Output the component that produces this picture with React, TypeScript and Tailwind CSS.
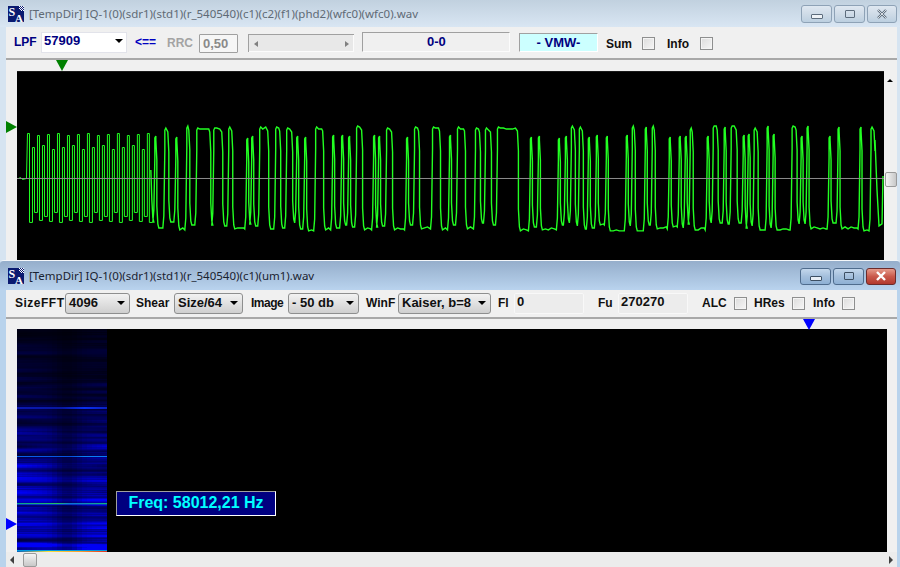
import type { ReactNode } from "react";

const ui = "font-['Liberation_Sans',Arial,sans-serif]";

// [start, end, level] of each high part of the trace, 0 = tall, 1 = short
const pulses: [number, number, number][] = [
  [155, 156, 1], [165, 168, 0], [176, 177, 1], [187, 189, 0], [197, 210, 0], [214, 222, 0], [229, 232, 0],
  [247, 248, 1], [252, 253, 1], [260, 268, 0], [276, 280, 0], [287, 292, 0], [297, 298, 1], [305, 306, 1],
  [316, 323, 0], [333, 334, 1], [342, 343, 1], [349, 350, 1], [357, 362, 0], [374, 375, 1], [379, 380, 1],
  [387, 392, 0], [407, 408, 1], [415, 419, 0], [433, 440, 0], [450, 451, 1], [458, 465, 0], [476, 480, 0],
  [486, 491, 0], [498, 518, 0], [531, 532, 1], [539, 540, 1], [559, 560, 1], [566, 567, 1], [572, 575, 0],
  [580, 583, 0], [589, 590, 1], [597, 598, 1], [607, 608, 1], [627, 628, 1], [633, 635, 0], [646, 647, 0],
  [653, 655, 0], [670, 671, 1], [680, 681, 1], [686, 687, 1], [691, 693, 0], [708, 709, 1], [714, 718, 0],
  [725, 726, 0], [732, 737, 0], [744, 745, 1], [749, 750, 1], [755, 758, 0], [768, 769, 0], [774, 775, 1],
  [793, 797, 0], [802, 803, 1], [808, 809, 0], [830, 831, 1], [839, 840, 0], [861, 862, 0], [872, 875, 0],
];

function wobble(n: number) {
  const v = Math.sin(n * 12.9898) * 43758.5453;
  return v - Math.floor(v);
}

// preamble, fast swing where every other cycle stops short
function preamblePoints() {
  const pts: string[] = ["18.5,178.5", "20.5,177.5", "22.5,179.5", "26.5,178.5"];
  for (let x = 27, i = 0; x < 151; x += 5, i++) {
    const top = i % 2 ? 145 + (i % 3) * 2 : 133 + (i % 3);
    const bottom = i % 2 ? 210 + (i % 4) * 2 : 222 - (i % 3);
    pts.push(`${x}.5,${top}.5`, `${x + 2}.5,${top}.5`, `${x + 2}.5,${bottom}.5`, `${x + 5}.5,${bottom}.5`);
  }
  return pts.join(" ");
}

function tracePoints() {
  const pts: string[] = ["151,170"];
  let prev = 151;
  pulses.forEach(([a, b, lvl], i) => {
    const gap = a - prev;
    const low = gap < 10 ? 222 + Math.round(wobble(i) * 7) : 229 + Math.round(wobble(i) * 2);
    if (gap >= 4) {
      pts.push(`${prev + 1},${low - 22}`, `${prev + 2},${low - 4}`, `${prev + 3},${low}`);
      for (let x = prev + 6; x < a - 2; x += 3) pts.push(`${x},${low - Math.round(wobble(x) * 2)}`);
      pts.push(`${a - 2},${low}`, `${a - 1},${low - 12}`);
    } else {
      pts.push(`${prev + 1},${low}`);
    }
    const high = lvl ? 134 + Math.round(wobble(i + 9) * 4) : 126 + Math.round(wobble(i + 9) * 2);
    pts.push(`${a},${high + 22}`, `${a},${high + 2}`, `${a + 1},${high}`);
    for (let x = a + 3; x < b; x += 3) pts.push(`${x},${high + Math.round(wobble(x) * 2)}`);
    pts.push(`${b},${high + 4}`, `${b + 1},${high + 24}`);
    prev = b;
  });
  pts.push("876,140", "878,190", "880,226", "883,224", "884,176");
  return pts.join(" ");
}

function Waveform() {
  return (
    <svg width="868" height="190" viewBox="17 71 868 190" className="block">
      <rect x="17" y="71" width="868" height="190" fill="#000" />
      <polyline points={preamblePoints()} fill="none" stroke="#22ff22" strokeWidth="1" />
      <polyline points={tracePoints()} fill="none" stroke="#22ff22" strokeWidth="1.4" />
      <line x1="17" x2="885" y1="178.5" y2="178.5" stroke="#8c8c8c" />
    </svg>
  );
}

function noise(y: number, seed: number) {
  // a row value, softened with its neighbours so the streaks run together
  const n = (k: number) => wobble(k * 3.17 + seed);
  return n(y) * 0.4 + (n(y - 1) + n(y + 1)) * 0.2 + (n(y - 2) + n(y + 2)) * 0.1;
}

function Spectrogram() {
  const rows = [];
  const colW = 5;
  for (let y = 0; y < 223; y++) {
    const base = y < 76 ? 22 + y * 0.4 : y < 127 ? 64 + (y - 76) * 0.8 : 120 + (y - 127) * 0.7;
    for (let c = 0; c < 18; c++) {
      const t = c / 17;
      const dark = 1 - 0.4 * Math.exp(-Math.pow((t - 0.56) / 0.16, 2));
      const v = noise(y, 1) * (1 - t) + noise(y, 7) * t;
      const b = base * (0.3 + Math.pow(v, 1.5) * 2.2) * dark;
      rows.push(<rect key={`${y}-${c}`} x={c * colW} y={y} width={colW + 0.5} height="1" fill={`rgb(0,0,${Math.min(245, Math.round(b))})`} />);
    }
  }
  return (
    <svg width="90" height="223" viewBox="0 0 90 223" className="block shrink-0" shapeRendering="crispEdges">
      <defs>
        <linearGradient id="line-a">
          <stop offset="0" stopColor="#0a18b0" />
          <stop offset="0.5" stopColor="#0818a0" />
          <stop offset="0.75" stopColor="#0a30f0" />
          <stop offset="1" stopColor="#0a20c0" />
        </linearGradient>
        <linearGradient id="line-b">
          <stop offset="0" stopColor="#0860f0" />
          <stop offset="0.6" stopColor="#0650e0" />
          <stop offset="0.75" stopColor="#0a80f8" />
          <stop offset="1" stopColor="#0a78f8" />
        </linearGradient>
        <linearGradient id="line-c">
          <stop offset="0" stopColor="#08a090" />
          <stop offset="0.45" stopColor="#20c060" />
          <stop offset="0.6" stopColor="#0a70d8" />
          <stop offset="1" stopColor="#10b878" />
        </linearGradient>
        <linearGradient id="line-d">
          <stop offset="0" stopColor="#0060c0" />
          <stop offset="0.35" stopColor="#f8e040" />
          <stop offset="0.7" stopColor="#f8a030" />
          <stop offset="1" stopColor="#e03020" />
        </linearGradient>
      </defs>
      {rows}
      <rect y="78" width="90" height="2" fill="url(#line-a)" />
      <rect y="127" width="90" height="1" fill="url(#line-b)" />
      <rect y="174" width="90" height="1" fill="url(#line-c)" />
      <rect y="175" width="90" height="1" fill="#0838c8" />
      <rect y="221" width="90" height="1" fill="#0098e0" />
      <rect y="222" width="90" height="1" fill="url(#line-d)" />
    </svg>
  );
}

function Check({ ml, mt = "" }: { ml: string; mt?: string }) {
  return <span className={`block size-[13px] shrink-0 border border-[#8e8f8f] bg-gradient-to-br from-[#dcdcdc] to-[#f6f6f6] outline-1 -outline-offset-2 outline-[#f4f4f4] ${ml} ${mt}`} />;
}

function Label({ children, w, ml, color = "text-[#101010]", mt = "" }: { children: ReactNode; w: string; ml: string; color?: string; mt?: string }) {
  return <span className={`shrink-0 text-[12px] leading-none font-bold whitespace-nowrap ${color} ${w} ${ml} ${mt}`}>{children}</span>;
}

function Caret() {
  return <span className="block h-0 w-0 border-x-[4.5px] border-t-[4.5px] border-x-transparent border-t-black" />;
}

function Combo({ text, w, ml }: { text: string; w: string; ml: string }) {
  return (
    <div className={`flex h-[21px] shrink-0 items-center justify-between rounded-[3px] border border-[#8e8f8f] bg-gradient-to-b from-[#f2f2f2] to-[#cfcfcf] pr-[4px] pl-[3px] text-[13px] font-bold text-[#101010] ${w} ${ml}`}>
      <span>{text}</span>
      <Caret />
    </div>
  );
}

function ReadOnly({ text, ml }: { text: string; ml: string }) {
  return (
    <div className={`h-[21px] w-[70px] shrink-0 rounded-[2px] border border-[#f8f8f8] bg-[#ececec] pl-[2px] text-[13px] leading-[16px] font-bold text-[#101010] ${ml}`}>
      {text}
    </div>
  );
}

function WinButtons({ active }: { active?: boolean }) {
  const base = active
    ? "border-[#4f6c8d] from-[#c3d7ec] via-[#a4bfdc] to-[#8eb0d4]"
    : "border-[#8ea2b6] from-[#dfe8f1] via-[#cfdbe7] to-[#bccfe0]";
  const close = active ? "border-[#6b2b2b] from-[#e59a8b] via-[#c9594c] to-[#b2382d]" : base;
  const glyph = active ? "border-[#3d4f63] bg-[#e8eef5]" : "border-[#5d6c7c] bg-[#eef2f6]";
  return (
    <div className={`flex gap-[2px] ${active ? "h-[17px]" : "h-[18px]"}`}>
      <div className={`flex w-[31px] items-end justify-center rounded-[3px] border bg-gradient-to-b pb-[3px] ${base}`}>
        <span className={`block h-[5px] w-[12px] rounded-[1px] border ${glyph}`} />
      </div>
      <div className={`flex w-[31px] items-center justify-center rounded-[3px] border bg-gradient-to-b ${base}`}>
        <span className={`block h-[8px] w-[10px] rounded-[1px] border-[1.5px] ${active ? "border-[#3d4f63]" : "border-[#5d6c7c]"}`} />
      </div>
      <div className={`flex w-[30px] items-center justify-center rounded-[3px] border bg-gradient-to-b ${close}`}>
        <svg width="12" height="10" viewBox="0 0 12 10">
          <path d="M2 1 L10 9 M10 1 L2 9" stroke={active ? "#fff" : "#5d6c7c"} strokeWidth="2.4" />
          {!active && <path d="M2 1 L10 9 M10 1 L2 9" stroke="#f4f7fa" strokeWidth="0.8" />}
        </svg>
      </div>
    </div>
  );
}

function Logo() {
  return (
    <svg width="16" height="16" viewBox="0 0 16 16" className="shrink-0">
      <rect width="16" height="16" fill="#0a1a70" />
      <path d="M11 0h1v1h-1zM13 0h1v1h-1zM15 0h1v1h-1zM12 1h1v1h-1zM14 1h1v1h-1zM11 2h1v1h-1zM13 2h1v1h-1zM15 2h1v1h-1zM12 3h1v1h-1zM14 3h1v1h-1zM13 4h1v1h-1zM15 4h1v1h-1z" fill="#fff" />
      <text x="0.5" y="10" fontFamily="'Liberation Serif',serif" fontSize="12" fontWeight="700" fill="#fff">S</text>
      <text x="7" y="15.5" fontFamily="'Liberation Serif',serif" fontSize="11" fontWeight="700" fill="#fff">A</text>
    </svg>
  );
}

function TitleBar({ title, active }: { title: string; active?: boolean }) {
  return (
    <div className={`flex shrink-0 items-center pl-[8px] ${active ? "h-[29px] bg-gradient-to-b from-[#95aecb] to-[#b9d3ee] pr-[4px] pt-[1px]" : "h-[27px] bg-gradient-to-b from-[#c1d1df] to-[#d9e6f3] pr-[3px]"}`}>
      <Logo />
      <span className={`ml-[5px] flex-1 font-['Noto_Sans',sans-serif] text-[11.5px] ${active ? "text-[#1a2230]" : "text-[#5f6a75]"}`}>{title}</span>
      <WinButtons active={active} />
    </div>
  );
}

function TopWindow() {
  return (
    <div className={`absolute top-0 left-0 flex h-[261px] w-[900px] flex-col overflow-hidden bg-[#d6e4f1] ${ui}`}>
      <TitleBar title="[TempDir] IQ-1(0)(sdr1)(std1)(r_540540)(c1)(c2)(f1)(phd2)(wfc0)(wfc0).wav" />
      <div className="ml-[6px] mr-[3px] flex flex-1 flex-col bg-[#f0f0f0]">
        <div className="flex h-[33px] shrink-0 items-center border-b-2 border-[#a8a8a8] pb-[1px]">
          <Label w="w-[22px]" ml="ml-[8px]" color="text-[#000080]">LPF</Label>
          <div className="ml-[5px] flex h-[21px] w-[86px] shrink-0 items-center justify-between border border-[#e2e3ea] bg-white pr-[3px] pl-[2px] pb-[2px] text-[13px] font-bold text-[#000080]">
            <span>57909</span>
            <Caret />
          </div>
          <Label w="w-[23px]" ml="ml-[8px]" color="text-[#0000c0]">{"<=="}</Label>
          <Label w="w-[26px]" ml="ml-[9px]" color="text-[#a3a3a3]" mt="mt-[1px]">RRC</Label>
          <div className="mt-[2px] ml-[6px] h-[19px] w-[39px] shrink-0 rounded-[1px] border border-[#a0a0a0] bg-[#f6f6f6] pl-[3px] text-[13px] leading-[18px] font-bold text-[#8a8a8a]">0,50</div>
          <div className="mt-[2px] ml-[10px] flex h-[18px] w-[106px] shrink-0 items-center justify-between border-t border-l border-[#a0a0a0] bg-[#e8e8e8] px-[5px] shadow-[inset_-1px_-1px_0_#fbfbfb]">
            <span className="block h-0 w-0 border-y-[3.5px] border-r-[4px] border-y-transparent border-r-[#808080]" />
            <span className="block h-0 w-0 border-y-[3.5px] border-l-[4px] border-y-transparent border-l-[#808080]" />
          </div>
          <div className="ml-[8px] h-[20px] w-[148px] shrink-0 border border-t-[#a0a0a0] border-r-[#fcfcfc] border-b-[#fcfcfc] border-l-[#a0a0a0] pl-[64px] text-[13px] leading-[18px] font-bold text-[#000080]">0-0</div>
          <div className="ml-[9px] h-[19px] w-[79px] shrink-0 border border-t-[#a0a0a0] border-r-white border-b-white border-l-[#a0a0a0] bg-[#ccffff] text-center text-[13px] leading-[17px] font-bold text-[#000080]">- VMW-</div>
          <Label w="w-[24px]" ml="ml-[8px]" mt="mt-[3px]">Sum</Label>
          <Check ml="ml-[12px]" mt="mt-[3px]" />
          <Label w="w-[21px]" ml="ml-[12px]" mt="mt-[3px]">Info</Label>
          <Check ml="ml-[12px]" mt="mt-[3px]" />
        </div>
        <div className="relative flex flex-1 pt-[11px] pl-[11px]">
          <Waveform />
          <div className="relative w-[13px] shrink-0">
            <span className="absolute top-[8px] left-[3px] block h-0 w-0 border-x-[3.5px] border-b-[3.5px] border-x-transparent border-b-black" />
            <span className="absolute top-[101px] left-[1px] block h-[15px] w-[12px] rounded-[2px] border border-[#9a9a9a] bg-gradient-to-r from-[#f4f4f4] to-[#c8c8c8]" />
          </div>
          <span className="absolute top-0 left-[50px] block h-0 w-0 border-x-[6px] border-t-[11px] border-x-transparent border-t-[#008000]" />
          <span className="absolute top-[61px] left-0 block h-0 w-0 border-y-[6px] border-l-[11px] border-y-transparent border-l-[#008000]" />
        </div>
      </div>
    </div>
  );
}

function BottomWindow() {
  return (
    <div className={`absolute top-[260px] left-0 flex h-[307px] w-[900px] flex-col overflow-hidden rounded-t-[4px] border-t border-[#f4f7fa] bg-[#b9d3ec] ${ui}`}>
      <TitleBar active title="[TempDir] IQ-1(0)(sdr1)(std1)(r_540540)(c1)(um1).wav" />
      <div className="ml-[6px] mr-[3px] flex flex-1 flex-col bg-[#f0f0f0]">
        <div className="flex h-[29px] shrink-0 items-center border-b-2 border-[#a8a8a8] pb-[1px]">
          <Label w="w-[46px] tracking-[0.5px]" ml="ml-[9px]">SizeFFT</Label>
          <Combo text="4096" w="w-[65px]" ml="ml-[4px]" />
          <Label w="w-[33px]" ml="ml-[6px]">Shear</Label>
          <Combo text="Size/64" w="w-[69px]" ml="ml-[5px]" />
          <Label w="w-[33px] tracking-[-0.5px]" ml="ml-[8px]">Image</Label>
          <Combo text="- 50 db" w="w-[71px]" ml="ml-[4px]" />
          <Label w="w-[29px]" ml="ml-[7px]">WinF</Label>
          <Combo text="Kaiser, b=8" w="w-[93px]" ml="ml-[3px]" />
          <Label w="w-[10px]" ml="ml-[7px]">Fl</Label>
          <ReadOnly text="0" ml="ml-[6px]" />
          <Label w="w-[14px]" ml="ml-[14px]">Fu</Label>
          <ReadOnly text="270270" ml="ml-[6px]" />
          <Label w="w-[23px]" ml="ml-[14px]">ALC</Label>
          <Check ml="ml-[9px]" />
          <Label w="w-[31px]" ml="ml-[7px]">HRes</Label>
          <Check ml="ml-[7px]" />
          <Label w="w-[21px]" ml="ml-[8px]">Info</Label>
          <Check ml="ml-[8px]" />
        </div>
        <div className="relative flex flex-1 flex-col pt-[10px]">
          <div className="ml-[11px] flex h-[223px] w-[870px] bg-black">
            <Spectrogram />
          </div>
          <div className="flex h-[15px] items-center bg-[#ececec] pr-[4px] pl-[4px]">
            <span className="block h-0 w-0 border-y-[4px] border-r-[4px] border-y-transparent border-r-[#404040]" />
            <span className="ml-[9px] block h-[14px] w-[14px] rounded-[2px] border border-[#9a9a9a] bg-gradient-to-b from-[#f4f4f4] to-[#c8c8c8]" />
            <span className="ml-auto block h-0 w-0 border-y-[4px] border-l-[4px] border-y-transparent border-l-[#404040]" />
          </div>
          <span className="absolute top-0 left-[797px] block h-0 w-0 border-x-[6px] border-t-[11px] border-x-transparent border-t-[#0000ff]" />
          <span className="absolute top-[199px] left-0 block h-0 w-0 border-y-[6px] border-l-[11px] border-y-transparent border-l-[#0000ff]" />
          <div className="absolute top-[172px] left-[110px] h-[25px] w-[160px] border border-t-[#a0a0a0] border-r-white border-b-white border-l-[#a0a0a0] bg-[#000080] text-center text-[16px] leading-[22px] font-bold text-[#00ffff]">
            Freq: 58012,21 Hz
          </div>
        </div>
      </div>
    </div>
  );
}

export default function App() {
  return (
    <div className="relative h-[567px] w-[900px] overflow-hidden bg-[#b9d3ec]">
      <TopWindow />
      <BottomWindow />
    </div>
  );
}
